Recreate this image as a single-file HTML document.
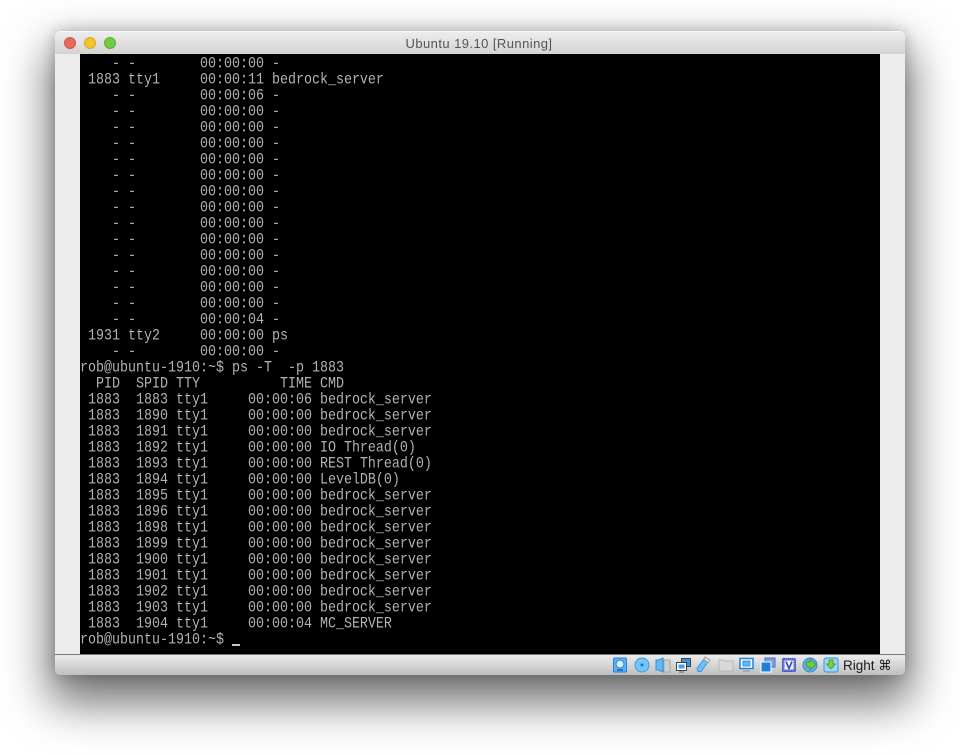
<!DOCTYPE html>
<html>
<head>
<meta charset="utf-8">
<style>
html,body{margin:0;padding:0;background:#fff;width:960px;height:755px;overflow:hidden}
#win{position:absolute;left:55px;top:31px;width:850px;height:644px;border-radius:6px 6px 5px 5px;background:#ececec;box-shadow:0 22px 45px 6px rgba(0,0,0,.56),0 0 14px rgba(0,0,0,.22)}
#title{position:absolute;left:0;top:0;width:850px;height:23px;border-radius:6px 6px 0 0;background:linear-gradient(#eeeeee,#d4d4d4);box-shadow:inset 0 1px 0 #f8f8f8;font:13px/25px "Liberation Sans",sans-serif;color:#555;text-align:center;letter-spacing:.44px;text-indent:-2px}
.tl{position:absolute;top:6px;width:12px;height:12px;border-radius:50%;text-indent:0}
#term{position:absolute;left:25px;top:23px;width:800px;height:600px;background:#000;overflow:hidden}
#term pre{position:absolute;left:0;top:3px;margin:0;font:13.33px/14px "Liberation Mono",monospace;color:#b2b2b2;transform:scaleY(1.142857);transform-origin:0 0}
#cursor{position:absolute;left:152px;top:590px;width:8px;height:2px;background:#c4c4c4}
#status{position:absolute;left:0;top:623px;width:850px;height:21px;border-top:1px solid #777;box-sizing:border-box;border-radius:0 0 5px 5px;background:linear-gradient(#ececec,#bfbfbf)}
#status span{position:absolute;left:788px;top:1px;font:13.500px/19px "Liberation Sans","DejaVu Sans",sans-serif;color:#1a1a1a;white-space:nowrap}
#icons{position:absolute;left:0;top:0}
</style>
</head>
<body>
<div id="win">
<div id="title">Ubuntu 19.10 [Running]
<div class="tl" style="left:9px;background:#e8685a;border:.5px solid #cf5548;box-sizing:border-box"></div>
<div class="tl" style="left:29px;background:#f2c42c;border:.5px solid #d6a92a;box-sizing:border-box"></div>
<div class="tl" style="left:49px;background:#6fcb42;border:.5px solid #5cae38;box-sizing:border-box"></div>
</div>
<div id="term"><pre>    - -        00:00:00 -
 1883 tty1     00:00:11 bedrock_server
    - -        00:00:06 -
    - -        00:00:00 -
    - -        00:00:00 -
    - -        00:00:00 -
    - -        00:00:00 -
    - -        00:00:00 -
    - -        00:00:00 -
    - -        00:00:00 -
    - -        00:00:00 -
    - -        00:00:00 -
    - -        00:00:00 -
    - -        00:00:00 -
    - -        00:00:00 -
    - -        00:00:00 -
    - -        00:00:04 -
 1931 tty2     00:00:00 ps
    - -        00:00:00 -
rob@ubuntu-1910:~$ ps -T  -p 1883
  PID  SPID TTY          TIME CMD
 1883  1883 tty1     00:00:06 bedrock_server
 1883  1890 tty1     00:00:00 bedrock_server
 1883  1891 tty1     00:00:00 bedrock_server
 1883  1892 tty1     00:00:00 IO Thread(0)
 1883  1893 tty1     00:00:00 REST Thread(0)
 1883  1894 tty1     00:00:00 LevelDB(0)
 1883  1895 tty1     00:00:00 bedrock_server
 1883  1896 tty1     00:00:00 bedrock_server
 1883  1898 tty1     00:00:00 bedrock_server
 1883  1899 tty1     00:00:00 bedrock_server
 1883  1900 tty1     00:00:00 bedrock_server
 1883  1901 tty1     00:00:00 bedrock_server
 1883  1902 tty1     00:00:00 bedrock_server
 1883  1903 tty1     00:00:00 bedrock_server
 1883  1904 tty1     00:00:04 MC_SERVER
rob@ubuntu-1910:~$ </pre><div id="cursor"></div></div>
<div id="status">
<svg id="icons" width="850" height="20" viewBox="55 655 850 20">
<rect x="613.500" y="658" width="13" height="14" rx="1" fill="#5ab4f2" stroke="#2a80d4"/><circle cx="620" cy="664" r="4" fill="#d7eefc" stroke="#2a80d4"/><path d="M617 670h6" stroke="#1a5fae" stroke-width="1.500"/>
<circle cx="642" cy="665" r="7" fill="#74c4f6" stroke="#3a9ae2"/><circle cx="642" cy="665" r="1.500" fill="#1c6fc4"/>
<path d="M656 660h3l4-2v14l-4-2h-3z" fill="#62baf5" stroke="#3590dc"/><path d="M664 660h6v12h-6z" fill="#cfcfcf" stroke="#a5a5a5"/>
<rect x="681.500" y="658.500" width="9" height="8" fill="#3f8fe0" stroke="#444"/><rect x="676.500" y="662.500" width="10" height="8" fill="#fff" stroke="#444"/><rect x="678.500" y="664.500" width="6" height="4" fill="#4a9fe8"/><path d="M679 672h5" stroke="#666"/>
<path d="M698 671.500l-1-3 7-9.500 4 3-7 9.500z" fill="#6cc0f7" stroke="#3a98e0"/><path d="M705 657l5 3-2 2.500-4-3z" fill="#e4e4e4" stroke="#a0a0a0"/>
<path d="M719 660h5l1 1h8v10h-14z" fill="#d8d8d8" stroke="#b8b8b8"/>
<rect x="740" y="658.500" width="13" height="10" fill="#fff" stroke="#2180d8" stroke-width="1.500"/><rect x="743" y="661" width="7" height="5" fill="#62baf5" stroke="#2180d8" stroke-width=".8"/><path d="M743 671h7" stroke="#a0a0a0" stroke-width="1.500"/>
<rect x="765" y="658" width="10" height="9" fill="#7a9fe4" stroke="#4a70c0"/><rect x="761" y="662" width="10" height="10" fill="#1c80dc" stroke="#fff"/>
<rect x="782.500" y="658.500" width="13" height="13" rx="1" fill="#5f74dc" stroke="#3a4eb0" stroke-dasharray="1.500 .6"/><rect x="784.500" y="660.500" width="9" height="9" fill="#eef0ff"/><path d="M786 661.500l3 7 3-7" fill="none" stroke="#3a4eb0" stroke-width="1.600"/>
<circle cx="810" cy="665" r="7" fill="#5cb0ea" stroke="#3488cc"/><path d="M806 662l4 0v-3l6 5.500-6 5.500v-3h-3z" fill="#7ac83a" stroke="#3f8f1e" stroke-width=".7"/>
<rect x="824" y="658" width="14" height="14" rx="2" fill="#98d6fa" stroke="#3592dc"/><path d="M829 660h4v4h2.500l-4.500 5-4.500-5h2.500z" fill="#84d032" stroke="#3c8e18" stroke-width=".7"/>
</svg>
<span>Right ⌘</span>
</div>
</div>
</body>
</html>
